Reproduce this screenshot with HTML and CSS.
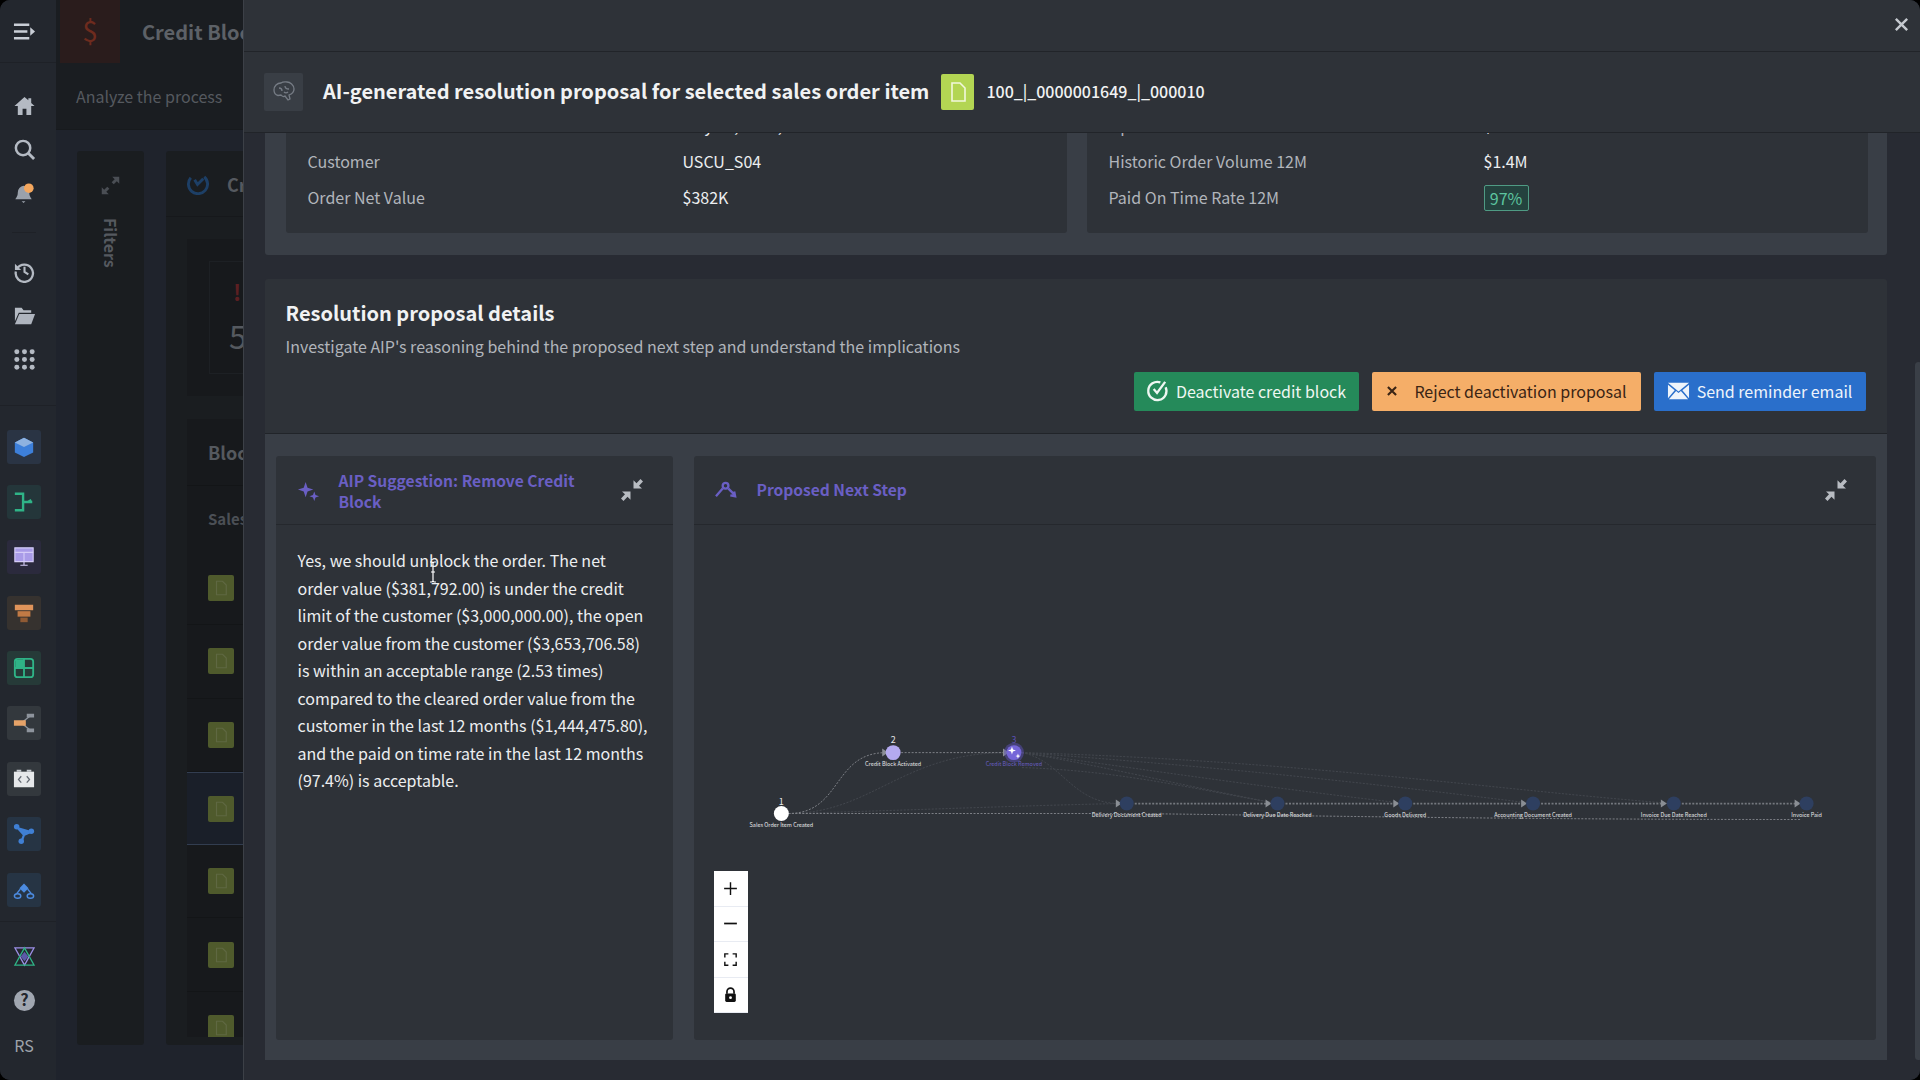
FILE: index.html
```html
<!DOCTYPE html>
<html lang="en">
<head>
    <meta charset="UTF-8">
    <meta name="viewport" content="width=device-width, initial-scale=1.0">
    <title>Credit Block</title>
    <link rel="stylesheet" href="styles.css">
</head>
<body>
    <svg class="defs" width="0" height="0">
        <symbol id="doc" viewBox="0 0 24 24"><path d="M6 3h8l5 5v13H6z" fill="none" stroke="currentColor" stroke-width="1.6"/></symbol>
        <symbol id="collapse" viewBox="0 0 24 24"><path d="M13.500 10.500h8.500l-3-2.800L23 3.500 20.500 1l-4 4.200-3-3zM10.500 13.500H2l3 2.800L1 20.500 3.500 23l4-4.200 3 3z" fill="currentColor"/></symbol>
    </svg>

    <div class="app">
        <nav class="sidebar">
            <div class="side-top">
                <svg class="nav-icon" viewBox="0 0 24 24"><path d="M1 5h16M1 12h14M1 19h16" stroke="#c9ced6" stroke-width="2.600" fill="none"/><path d="M18 7.500l5 4.500-5 4.500z" fill="#c9ced6"/></svg>
            </div>
            <div class="side-group side-main">
                <svg class="nav-icon" viewBox="0 0 24 24"><path d="M12 3 1.500 12.500H5V22h5v-6.500h4V22h5v-9.500h3.500L19 9.300V4.500h-3v2z" fill="#b4bac3"/></svg>
                <svg class="nav-icon" viewBox="0 0 24 24"><circle cx="10.500" cy="10.500" r="7.500" fill="none" stroke="#b4bac3" stroke-width="2.600"/><path d="m16 16 6 6" stroke="#b4bac3" stroke-width="3"/></svg>
                <svg class="nav-icon" viewBox="0 0 24 24"><path d="M11 4a7 7 0 0 0-6 7c0 4-1.500 5-2.500 7h17c-1-2-2.500-3-2.500-7a7 7 0 0 0-6-7zM9 20h4l-2 2z" fill="#9aa1ab"/><circle cx="16.500" cy="6.500" r="5" fill="#f4a75e"/></svg>
            </div>
            <div class="side-rule"></div>
            <div class="side-group side-recent">
                <svg class="nav-icon" viewBox="0 0 24 24"><path d="M4.200 9A9 9 0 1 1 3 12" fill="none" stroke="#b4bac3" stroke-width="2.400"/><path d="M2 4v6.500h6.500z" fill="#b4bac3"/><path d="M12 7v5.500l4 2.500" fill="none" stroke="#b4bac3" stroke-width="2.200"/></svg>
                <svg class="nav-icon" viewBox="0 0 24 24"><path d="M2 4h7l2 2.500h8V9H6l-4 9z" fill="#b4bac3"/><path d="M6.500 10.500H23L19 21H2z" fill="#aeb4be"/></svg>
                <svg class="nav-icon" viewBox="0 0 24 24" fill="#b4bac3"><circle cx="4" cy="4" r="2.600"/><circle cx="12" cy="4" r="2.600"/><circle cx="20" cy="4" r="2.600"/><circle cx="4" cy="12" r="2.600"/><circle cx="12" cy="12" r="2.600"/><circle cx="20" cy="12" r="2.600"/><circle cx="4" cy="20" r="2.600"/><circle cx="12" cy="20" r="2.600"/><circle cx="20" cy="20" r="2.600"/></svg>
            </div>
            <div class="side-apps">
                <div class="tile tile-blue"><svg viewBox="0 0 24 24"><path d="M12 2 22 7v11l-10 5-10-5V7z" fill="#3d7fd9"/><path d="M12 2 22 7l-10 5L2 7z" fill="#8eb2e0"/></svg></div>
                <div class="tile tile-green"><svg viewBox="0 0 24 24" fill="none" stroke="#2fb487" stroke-width="2.600"><path d="M2 3h9v18H2M11 12h10M16 12l4-2"/></svg></div>
                <div class="tile tile-purple"><svg viewBox="0 0 24 24"><path d="M2 2h20v15H2z" fill="#a99be8" stroke="#d5ccf7" stroke-width="1.200"/><path d="M2 7h20M12 7v10M8 21h8M12 17v4" stroke="#d5ccf7" stroke-width="1.200"/></svg></div>
                <div class="tile tile-brown"><svg viewBox="0 0 24 24"><path d="M2 3h20v6H2z" fill="#e0945a"/><path d="M5 10h14v6H5z" fill="#c17a45"/><path d="M8 17h8v5H8z" fill="#8f5a34"/></svg></div>
                <div class="tile tile-mint"><svg viewBox="0 0 24 24"><rect x="2" y="2" width="20" height="20" rx="3" fill="none" stroke="#2fb487" stroke-width="2"/><path d="M2 12h20M12 2v20" stroke="#2fb487" stroke-width="2"/><path d="M3 3h9v9H3z" fill="#2fb487"/></svg></div>
                <div class="tile tile-grey"><svg viewBox="0 0 24 24"><path d="M9 12 19 4M9 12l10 8" stroke="#8e949d" stroke-width="1.400"/><path d="M1 9h13v6H1z" fill="#e5a268"/><path d="M15 2h8v4h-8zM15 18h8v4h-8z" fill="#8e949d"/></svg></div>
                <div class="tile tile-grey"><svg viewBox="0 0 24 24"><path d="M1 4h22v17H1z" fill="#e6e8ea"/><path d="M4 2h5v2H4zM15 2h5v2h-5z" fill="#c8ccd1"/><path d="m9 9-3 3.500L9 16M15 9l3 3.500-3 3.500" fill="none" stroke="#666c75" stroke-width="1.400"/></svg></div>
                <div class="tile tile-navy"><svg viewBox="0 0 24 24" fill="#3f7fd4"><path d="M4 4l8 9 9-4M12 13l-3 8" stroke="#3f7fd4" stroke-width="2.400"/><circle cx="4" cy="4" r="3"/><circle cx="20" cy="9" r="3"/><circle cx="9" cy="20" r="3"/></svg></div>
                <div class="tile tile-navy"><svg viewBox="0 0 24 24"><path d="m12 5 5 5-5 5-5-5z" fill="#4c8be0"/><path d="M8 11l-4 5M16 11l4 5" stroke="#4c8be0" stroke-width="1.600"/><ellipse cx="5" cy="18.500" rx="3.500" ry="2.500" fill="none" stroke="#4c8be0" stroke-width="1.600"/><ellipse cx="19" cy="18.500" rx="3.500" ry="2.500" fill="none" stroke="#4c8be0" stroke-width="1.600"/></svg></div>
            </div>
            <div class="side-group side-bottom">
                <svg class="nav-icon" viewBox="0 0 24 24" fill="none" stroke-width="1.300"><path d="M2 3h20L12 21z" stroke="#9c8fe6"/><path d="M12 3 2 21h20z" stroke="#2fb487"/><path d="m12 7-4 5 4 5 4-5z" fill="#5b5aa8"/></svg>
                <svg class="nav-icon" viewBox="0 0 24 24"><circle cx="12" cy="12" r="11" fill="#a0a6b0"/><text x="12" y="17.500" text-anchor="middle" class="help-mark">?</text></svg>
                <span class="initials">RS</span>
            </div>
        </nav>

        <main class="page">
            <header class="page-head">
                <div class="page-title">
                    <div class="dollar-tile">$</div>
                    <h1>Credit Block</h1>
                </div>
                <p class="page-sub">Analyze the process</p>
            </header>
            <div class="page-body">
                <aside class="filters">
                    <svg class="filters-icon" viewBox="0 0 24 24"><path d="M14 2h8v8l-2.800-2.800-3.500 3.500-2.400-2.400 3.500-3.500zM10 22H2v-8l2.800 2.800 3.500-3.500 2.400 2.400-3.500 3.500z" fill="#4a4e54"/></svg>
                    <span class="filters-label">Filters</span>
                </aside>
                <section class="bg-card">
                    <div class="bg-card-head">
                        <svg class="clock-icon" viewBox="0 0 24 24" fill="none" stroke="#1d3f66" stroke-width="3"><path d="M5 6a10 10 0 1 0 14-1"/><path d="m9 8 3 5 6-6"/></svg>
                        <span>Credit</span>
                    </div>
                    <div class="bg-card-inner">
                        <div class="kpi">
                            <div class="kpi-inner">
                                <span class="kpi-alert">!</span>
                                <span class="kpi-number">5</span>
                            </div>
                        </div>
                        <div class="bg-table">
                            <div class="bg-table-title">Blocked</div>
                            <div class="bg-table-cols">Sales</div>
                            <div class="bg-row"><span class="doc-tile"><svg><use href="#doc"/></svg></span></div>
                            <div class="bg-row"><span class="doc-tile"><svg><use href="#doc"/></svg></span></div>
                            <div class="bg-row"><span class="doc-tile"><svg><use href="#doc"/></svg></span></div>
                            <div class="bg-row bg-row-active"><span class="doc-tile"><svg><use href="#doc"/></svg></span></div>
                            <div class="bg-row"><span class="doc-tile"><svg><use href="#doc"/></svg></span></div>
                            <div class="bg-row"><span class="doc-tile"><svg><use href="#doc"/></svg></span></div>
                            <div class="bg-row"><span class="doc-tile"><svg><use href="#doc"/></svg></span></div>
                        </div>
                    </div>
                </section>
            </div>
        </main>

        <div class="modal">
            <div class="modal-top">
                <svg class="close" viewBox="0 0 24 24"><path d="M4 4l16 16M20 4 4 20" stroke="#c4c8ce" stroke-width="3.400"/></svg>
            </div>
            <div class="modal-head">
                <div class="brain-tile">
                    <svg viewBox="0 0 24 24" fill="none" stroke="#767c85" stroke-width="1.300"><path d="M9 3C5 3 2 6 2 10c0 3 2 5 4 5.500L9 15c1 1.500 3 2 4 1l3 4 2-1-1-4c3-1 5-3 5-6 0-4-4-7-7-7-2 0-4-.500-6 1z"/><path d="M7 8c2 0 3 1 3 3M13 6c0 3 2 3 4 3M12 12c1 1 3 1 4 0"/></svg>
                </div>
                <h2>AI-generated resolution proposal for selected sales order item</h2>
                <span class="doc-badge"><svg><use href="#doc"/></svg></span>
                <span class="order-id">100_|_0000001649_|_000010</span>
            </div>
            <div class="modal-scroll">
                <div class="modal-content">
                    <section class="info-panel">
                        <dl class="info-card">
                            <dt>Created On</dt><dd>May 15, 2024, 10:32</dd>
                            <dt>Customer</dt><dd>USCU_S04</dd>
                            <dt>Order Net Value</dt><dd>$382K</dd>
                        </dl>
                        <dl class="info-card">
                            <dt>Open Order Volume</dt><dd>$3.7M</dd>
                            <dt>Historic Order Volume 12M</dt><dd>$1.4M</dd>
                            <dt>Paid On Time Rate 12M</dt><dd><span class="rate">97%</span></dd>
                        </dl>
                    </section>

                    <section class="details">
                        <h3>Resolution proposal details</h3>
                        <p>Investigate AIP's reasoning behind the proposed next step and understand the implications</p>
                        <div class="actions">
                            <button class="btn btn-green">
                                <svg viewBox="0 0 24 24" fill="none" stroke="currentColor" stroke-width="2.400"><path d="M15 3.500a9.500 9.500 0 1 0 5.500 5"/><path d="m8 10.500 3.500 4L20 3"/></svg>
                                Deactivate credit block
                            </button>
                            <button class="btn btn-orange">
                                <svg class="btn-x" viewBox="0 0 24 24"><path d="m5 5 14 14M19 5 5 19" stroke="currentColor" stroke-width="3.600"/></svg>
                                Reject deactivation proposal
                            </button>
                            <button class="btn btn-blue">
                                <svg viewBox="0 0 24 24"><path d="M1 4h22l-11 9z" fill="currentColor"/><path d="M1 6v14l7-8.300zM23 6v14l-7-8.300zM2 21h20l-7.500-8.500-2.500 2-2.500-2z" fill="currentColor"/></svg>
                                Send reminder email
                            </button>
                        </div>
                    </section>

                    <section class="split">
                        <article class="split-card split-left">
                            <header class="split-head">
                                <svg class="split-icon" viewBox="0 0 24 24" fill="#6a5fc4"><path d="M9 3l2 6 6 2-6 2-2 6-2-6-6-2 6-2z"/><path d="M18 13l1.300 3.700L23 18l-3.700 1.300L18 23l-1.300-3.700L13 18l3.700-1.300z"/></svg>
                                <h4>AIP Suggestion: Remove Credit Block</h4>
                                <svg class="collapse"><use href="#collapse"/></svg>
                            </header>
                            <p class="answer">Yes, we should unblock the order. The net order value ($381,792.00) is under the credit limit of the customer ($3,000,000.00), the open order value from the customer ($3,653,706.58) is within an acceptable range (2.53 times) compared to the cleared order value from the customer in the last 12 months ($1,444,475.80), and the paid on time rate in the last 12 months (97.4%) is acceptable.</p>
                            <svg class="ibeam" viewBox="0 0 10 22"><path d="M2 1h2l1 1 1-1h2M5 2v18M2 21h2l1-1 1 1h2M3 11h4" fill="none" stroke="#fff" stroke-width="1.200"/></svg>
                        </article>
                        <article class="split-card split-right">
                            <header class="split-head">
                                <svg class="split-icon" viewBox="0 0 24 24" fill="none" stroke="#6a5fc4" stroke-width="2.400"><circle cx="11" cy="7" r="3"/><path d="M1 18l7-8M14 10l6 6M16 17l5 1-1-5"/></svg>
                                <h4>Proposed Next Step</h4>
                                <svg class="collapse"><use href="#collapse"/></svg>
                            </header>
                            <div class="graph-wrap">
                                <svg class="graph" viewBox="691.500 524 1184 516">
                                    <g class="edges-faint">
                                        <path d="M1020 752C1300 760 1500 790 1672 803"/>
                                        <path d="M1020 752C1200 765 1350 780 1532 803"/>
                                        <path d="M1020 752C1150 770 1250 785 1404 803"/>
                                        <path d="M1020 752C1100 765 1180 785 1276 803"/>
                                        <path d="M1020 767C1120 770 1200 790 1276 803"/>
                                        <path d="M1020 752C1060 760 1070 803 1118 803"/>
                                        <path d="M786 813C900 810 1020 805 1118 803"/>
                                        <path d="M786 813C870 813 900 752 1005 752"/>
                                    </g>
                                    <g class="edges">
                                        <path d="M786 813C840 813 830 752 884 752"/>
                                        <path d="M899 752H1005"/>
                                        <path d="M786 813H1130C1300 815 1500 819 1800 819"/>
                                    </g>
                                    <g class="edges-main">
                                        <path d="M1133 803H1267"/>
                                        <path d="M1284 803H1395"/>
                                        <path d="M1412 803H1523"/>
                                        <path d="M1540 803H1664"/>
                                        <path d="M1681 803H1797"/>
                                    </g>
                                    <g class="arrows">
                                        <path d="m880 748 6 4-6 4z"/><path d="m1001 748 6 4-6 4z"/><path d="m1114 799 6 4-6 4z"/>
                                        <path d="m1264 799 6 4-6 4z"/><path d="m1392 799 6 4-6 4z"/><path d="m1520 799 6 4-6 4z"/><path d="m1660 799 6 4-6 4z"/><path d="m1794 799 6 4-6 4z"/>
                                    </g>
                                    <circle cx="779" cy="813" r="7.500" fill="#fff"/>
                                    <circle cx="891" cy="752" r="7.500" fill="#b4aaf0"/>
                                    <circle cx="1012" cy="752" r="10" fill="#5b4fb5" opacity=".5"/>
                                    <circle cx="1012" cy="752" r="7.500" fill="#7566d8"/>
                                    <path d="M1010 746l1 3 3 1-3 1-1 3-1-3-3-1 3-1zM1016 753l.700 1.800 1.800.700-1.800.700-.700 1.800-.700-1.800-1.800-.700 1.800-.700z" fill="#fff"/>
                                    <g fill="#2e3f60">
                                        <circle cx="1125" cy="803" r="7"/><circle cx="1276" cy="803" r="7"/><circle cx="1404" cy="803" r="7"/><circle cx="1532" cy="803" r="7"/><circle cx="1673" cy="803" r="7"/><circle cx="1806" cy="803" r="7"/>
                                    </g>
                                    <g class="node-num">
                                        <text x="779" y="804">1</text>
                                        <text x="891" y="742">2</text>
                                        <text x="1012" y="742" class="num-active">3</text>
                                    </g>
                                    <g class="node-label">
                                        <text x="779" y="827">Sales Order Item Created</text>
                                        <text x="891" y="765">Credit Block Activated</text>
                                        <text x="1012" y="765" class="label-active">Credit Block Removed</text>
                                        <text x="1125" y="816.500">Delivery Document Created</text>
                                        <text x="1276" y="816.500">Delivery Due Date Reached</text>
                                        <text x="1404" y="816.500">Goods Delivered</text>
                                        <text x="1532" y="816.500">Accounting Document Created</text>
                                        <text x="1673" y="816.500">Invoice Due Date Reached</text>
                                        <text x="1806" y="816.500">Invoice Paid</text>
                                    </g>
                                </svg>
                                <div class="zoom-controls">
                                    <button><svg viewBox="0 0 24 24"><path d="M12 3v18M3 12h18" stroke="#111" stroke-width="2"/></svg></button>
                                    <button><svg viewBox="0 0 24 24"><path d="M3 12h18" stroke="#111" stroke-width="2.400"/></svg></button>
                                    <button><svg viewBox="0 0 24 24" fill="none" stroke="#111" stroke-width="2"><path d="M4 9V4h5M15 4h5v5M20 15v5h-5M9 20H4v-5"/></svg></button>
                                    <button><svg viewBox="0 0 24 24"><path d="M7 11V8a5 5 0 0 1 10 0v3" fill="none" stroke="#111" stroke-width="2.400"/><rect x="4.500" y="10.500" width="15" height="12" rx="2" fill="#111"/><circle cx="12" cy="16.500" r="2" fill="#fff"/></svg></button>
                                </div>
                            </div>
                        </article>
                    </section>
                </div>
                <div class="scroll-track"><div class="scroll-thumb"></div></div>
            </div>
        </div>
    </div>
</body>
</html>
```

FILE: styles.css
```css
:root {
    --page: #1f232c;
    --card-dark: #1a1d20;
    --modal: #2e3238;
    --panel: #393e46;
    --gutter: #282b33;
    --text: #e8eaec;
    --muted: #b1b5bb;
    --purple: #6a5fc4;
}

* {
    margin: 0;
    padding: 0;
    box-sizing: border-box;
}

body {
    background: #000;
    font-family: "Noto Sans CJK JP", "Noto Sans", sans-serif;
    color: var(--text);
    width: 1920px;
    height: 1080px;
    overflow: hidden;
}

.defs {
    position: absolute;
}

.app {
    position: relative;
    display: flex;
    width: 1920px;
    height: 1080px;
    border-radius: 10px;
    overflow: hidden;
    background: var(--page);
}

/* left rail */
.sidebar {
    width: 56px;
    flex-shrink: 0;
    display: flex;
    flex-direction: column;
    align-items: center;
    background: #23272e;
}

.side-top {
    width: 100%;
    height: 63px;
    display: flex;
    align-items: center;
    justify-content: center;
    border-bottom: 1px solid #1e2127;
    padding: 0 8px 0 0;
}

.nav-icon {
    width: 23px;
    height: 23px;
    display: block;
}

.side-group {
    display: flex;
    flex-direction: column;
    align-items: center;
    gap: 21px;
    width: 100%;
    padding-right: 8px;
}

.side-main {
    padding-top: 31px;
}

.side-rule {
    width: 24px;
    margin: 27px 8px 0 0;
    border-top: 1px solid #1e2127;
}

.side-recent {
    padding-top: 27px;
    padding-bottom: 34px;
    border-bottom: 1px solid #1e2127;
}

.side-apps {
    width: 100%;
    display: flex;
    flex-direction: column;
    align-items: center;
    gap: 21.400px;
    padding: 23.500px 8px 0 0;
}

.tile {
    width: 34px;
    height: 34px;
    border-radius: 3px;
    display: flex;
    align-items: center;
    justify-content: center;
}

.tile svg {
    width: 22px;
    height: 22px;
}

.tile-blue { background: #2a3444; }
.tile-green { background: #24363a; }
.tile-purple { background: #2b2a3d; }
.tile-brown { background: #36322f; }
.tile-mint { background: #263a38; }
.tile-grey { background: #33383d; }
.tile-navy { background: #263444; }

.side-bottom {
    margin-top: 14px;
    border-top: 1px solid #1e2127;
    padding-top: 23px;
}

.help-mark {
    font-size: 17px;
    font-weight: 700;
    fill: #23272e;
}

.initials {
    font-size: 16px;
    line-height: 20px;
    color: #9ea3aa;
    margin-top: 2px;
}

/* dimmed page behind the drawer */
.page {
    flex: 1;
    display: flex;
    flex-direction: column;
    min-width: 0;
}

.page-head {
    height: 130px;
    background: #1a1d21;
    border-bottom: 1px solid #171a1d;
}

.page-title {
    height: 63px;
    display: flex;
    align-items: center;
    padding-left: 4px;
}

.dollar-tile {
    width: 60px;
    height: 63px;
    background: #2a1c1c;
    color: #6e2b1e;
    font-size: 28px;
    line-height: 60px;
    text-align: center;
}

.page-title h1 {
    font-size: 20px;
    font-weight: 700;
    line-height: 26px;
    color: #5d6167;
    margin-left: 22px;
    white-space: nowrap;
}

.page-sub {
    font-size: 16px;
    line-height: 24px;
    color: #55595f;
    padding: 21px 0 0 20px;
    white-space: nowrap;
}

.page-body {
    flex: 1;
    display: flex;
    gap: 22px;
    padding: 21px 0 35px 21px;
    min-height: 0;
}

.filters {
    width: 67px;
    flex-shrink: 0;
    background: var(--card-dark);
    border-radius: 3px;
    display: flex;
    flex-direction: column;
    align-items: center;
    padding-top: 24px;
}

.filters-icon {
    width: 21px;
    height: 21px;
}

.filters-label {
    writing-mode: vertical-rl;
    font-size: 16px;
    font-weight: 700;
    color: #55595f;
    margin-top: 22px;
}

.bg-card {
    flex: 1;
    background: var(--card-dark);
    display: flex;
    flex-direction: column;
    min-width: 0;
    border-radius: 3px;
}

.bg-card-head {
    height: 66px;
    flex-shrink: 0;
    display: flex;
    align-items: center;
    gap: 18px;
    padding-left: 20px;
    font-size: 18px;
    font-weight: 700;
    color: #55595f;
    border-bottom: 1px solid #16181b;
    white-space: nowrap;
}

.clock-icon {
    width: 23px;
    height: 23px;
    flex-shrink: 0;
}

.bg-card-inner {
    flex: 1;
    padding: 22px 0 8px 21px;
    display: flex;
    flex-direction: column;
    gap: 23px;
    min-height: 0;
}

.kpi {
    height: 157px;
    flex-shrink: 0;
    background: #17191c;
    padding: 22px 0 22px 22px;
}

.kpi-inner {
    height: 113px;
    border: 1px solid #1d2024;
    border-right: 0;
    display: flex;
    flex-direction: column;
    padding-left: 19px;
}

.kpi-alert {
    font-size: 22px;
    line-height: 26px;
    font-weight: 700;
    color: #5c1f22;
    margin-top: 16px;
    padding-left: 4px;
}

.kpi-number {
    font-size: 32px;
    line-height: 38px;
    color: #55595f;
    margin-top: 12px;
}

.bg-table {
    flex: 1;
    background: #17191c;
    overflow: hidden;
    min-height: 0;
}

.bg-table-title {
    height: 67px;
    padding: 21px 0 0 21px;
    font-size: 18px;
    line-height: 24px;
    font-weight: 700;
    color: #55595f;
    border-bottom: 1px solid #131517;
    white-space: nowrap;
}

.bg-table-cols {
    height: 66px;
    padding: 21px 0 0 21px;
    font-size: 15px;
    line-height: 24px;
    font-weight: 700;
    color: #4b4f55;
}

.bg-row {
    height: 73.300px;
    display: flex;
    align-items: center;
    padding-left: 21px;
    border-bottom: 1px solid #131517;
}

.bg-row-active {
    background: #1a1f29;
    border-top: 1px solid #323d50;
    border-bottom: 1px solid #323d50;
}

.doc-tile {
    width: 26px;
    height: 26px;
    background: #4f5a2c;
    border-radius: 2px;
    display: flex;
    align-items: center;
    justify-content: center;
    color: #5f6842;
}

.doc-tile svg {
    width: 18px;
    height: 18px;
}

/* drawer */
.modal {
    position: absolute;
    top: 0;
    left: 243px;
    right: 0;
    bottom: 0;
    display: flex;
    flex-direction: column;
    background: var(--gutter);
    border-left: 1px solid #3c4047;
    border-radius: 0 10px 0 0;
    overflow: hidden;
}

.modal-top {
    height: 52px;
    flex-shrink: 0;
    background: var(--modal);
    border-bottom: 1px solid #212429;
    display: flex;
    justify-content: flex-end;
    align-items: center;
    padding: 0 10px 2px 0;
}

.close {
    width: 17px;
    height: 17px;
}

.modal-head {
    height: 81px;
    flex-shrink: 0;
    background: var(--modal);
    border-bottom: 1px solid #212429;
    display: flex;
    align-items: center;
    padding-left: 20px;
    position: relative;
    z-index: 1;
}

.brain-tile {
    width: 39px;
    height: 38px;
    background: #393e45;
    border-radius: 2px;
    display: flex;
    align-items: center;
    justify-content: center;
}

.brain-tile svg {
    width: 24px;
    height: 24px;
}

.modal-head h2 {
    font-size: 20px;
    font-weight: 700;
    line-height: 28px;
    margin: 0 0 2px 20px;
    color: #f1f2f3;
    white-space: nowrap;
}

.doc-badge {
    width: 33px;
    height: 36px;
    margin-left: 12px;
    background: #b3d553;
    border-radius: 2px;
    color: #f2f7dd;
    display: flex;
    align-items: center;
    justify-content: center;
}

.doc-badge svg {
    width: 24px;
    height: 26px;
}

.order-id {
    font-size: 16px;
    font-weight: 500;
    margin: 0 0 2px 12px;
    color: #f1f2f3;
}

.modal-scroll {
    flex: 1;
    display: flex;
    min-height: 0;
    overflow: hidden;
}

.modal-content {
    width: 1622px;
    margin-left: 20.500px;
    height: 947px;
    display: flex;
    flex-direction: column;
    justify-content: flex-end;
    flex-shrink: 0;
}

.info-panel {
    flex-shrink: 0;
    height: 198px;
    background: var(--panel);
    border-radius: 0 0 3px 3px;
    display: grid;
    grid-template-columns: 781px 781px;
    column-gap: 20px;
    padding: 0 21px 22px;
    margin-bottom: 24px;
}

.info-card {
    background: var(--modal);
    border-radius: 0 0 3px 3px;
    display: grid;
    grid-template-columns: 375px 1fr;
    grid-auto-rows: 36px;
    align-content: end;
    padding: 0 22px 18px;
    align-items: center;
    font-size: 16px;
    line-height: 24px;
}

.info-card dt {
    color: var(--muted);
}

.info-card dd {
    color: #eceef0;
}

.rate {
    display: inline-block;
    width: 45px;
    height: 26px;
    line-height: 25px;
    text-align: center;
    font-size: 16px;
    color: #5cc49f;
    background: #24423e;
    border: 1px solid #4f9b84;
    border-radius: 2px;
    vertical-align: middle;
}

.details {
    flex-shrink: 0;
    height: 155px;
    background: var(--modal);
    padding: 18px 21px 0;
    border-radius: 3px 3px 0 0;
    border-bottom: 1px solid #212429;
}

.details h3 {
    font-size: 20px;
    font-weight: 700;
    line-height: 32px;
    color: #f1f2f3;
}

.details p {
    font-size: 16px;
    line-height: 24px;
    color: var(--muted);
    margin-top: 5px;
}

.actions {
    display: flex;
    justify-content: flex-end;
    gap: 13px;
    margin-top: 14px;
}

.btn {
    height: 39px;
    border: none;
    border-radius: 2px;
    font-family: inherit;
    font-size: 16px;
    line-height: 24px;
    display: flex;
    align-items: center;
    justify-content: center;
    gap: 7px;
    padding-bottom: 2px;
    white-space: nowrap;
}

.btn svg {
    width: 23px;
    height: 23px;
    flex-shrink: 0;
}

.btn .btn-x {
    width: 14px;
    height: 14px;
    margin-right: 8px;
}

.btn-green {
    width: 225px;
    background: #258a5a;
    color: #eef7f2;
}

.btn-orange {
    width: 269px;
    background: #f5ae68;
    color: #3a2414;
}

.btn-blue {
    width: 212px;
    background: #2a6fcb;
    color: #eef4fb;
}

.split {
    flex-shrink: 0;
    height: 626px;
    margin-bottom: 20px;
    background: var(--panel);
    display: flex;
    gap: 21px;
    padding: 22px 11px 20px;
}

.split-card {
    background: var(--modal);
    border-radius: 3px;
    display: flex;
    flex-direction: column;
    position: relative;
}

.split-left {
    width: 397px;
}

.split-right {
    flex: 1;
}

.split-head {
    height: 69px;
    flex-shrink: 0;
    display: flex;
    align-items: center;
    border-bottom: 1px solid #25282d;
    padding: 0 28px 0 21px;
}

.split-icon {
    width: 23px;
    height: 23px;
    flex-shrink: 0;
    margin-right: 19px;
}

.split-head h4 {
    flex: 1;
    font-size: 15.600px;
    font-weight: 700;
    line-height: 21px;
    color: var(--purple);
}

.split-left h4 {
    padding-top: 2px;
}

.split-right h4 {
    padding-bottom: 2px;
}

.collapse {
    width: 24px;
    height: 24px;
    color: #b8bcc2;
    flex-shrink: 0;
}

.split-left .split-head {
    padding-right: 29px;
}

.answer {
    padding: 22px 24px 0 22px;
    font-size: 16px;
    line-height: 27.500px;
    color: #eceef0;
}

.ibeam {
    position: absolute;
    left: 152px;
    top: 105px;
    width: 10px;
    height: 22px;
}

.graph-wrap {
    flex: 1;
    position: relative;
}

.graph {
    display: block;
    width: 100%;
    height: 100%;
}

.edges-faint path,
.edges path,
.edges-main path {
    fill: none;
    stroke-dasharray: 2 1.500;
}

.edges-faint path {
    stroke: #42464d;
    stroke-width: 1;
}

.edges path {
    stroke: #7c8086;
    stroke-width: 1;
}

.edges-main path {
    stroke: #74787e;
    stroke-width: 1.800;
}

.arrows path {
    fill: #8a8e94;
}

.node-num text {
    font-size: 9px;
    text-anchor: middle;
    fill: #e6e7e9;
}

.node-num .num-active {
    fill: #5a4fb0;
}

.node-label text {
    font-size: 5.500px;
    text-anchor: middle;
    fill: #e6e7e9;
}

.node-label .label-active {
    fill: #6a5fc4;
}

.zoom-controls {
    position: absolute;
    left: 20px;
    top: 346px;
    width: 34px;
    background: #fff;
    display: flex;
    flex-direction: column;
}

.zoom-controls button {
    height: 35.500px;
    background: #fff;
    border: none;
    border-bottom: 1px solid #e8ebf2;
    display: flex;
    align-items: center;
    justify-content: center;
}

.zoom-controls svg {
    width: 17px;
    height: 17px;
}

.scroll-track {
    flex: 1;
    padding: 229px 0 20px 28px;
}

.scroll-thumb {
    width: 7px;
    height: 698px;
    background: #3a3f47;
    border-radius: 4px;
}
```
